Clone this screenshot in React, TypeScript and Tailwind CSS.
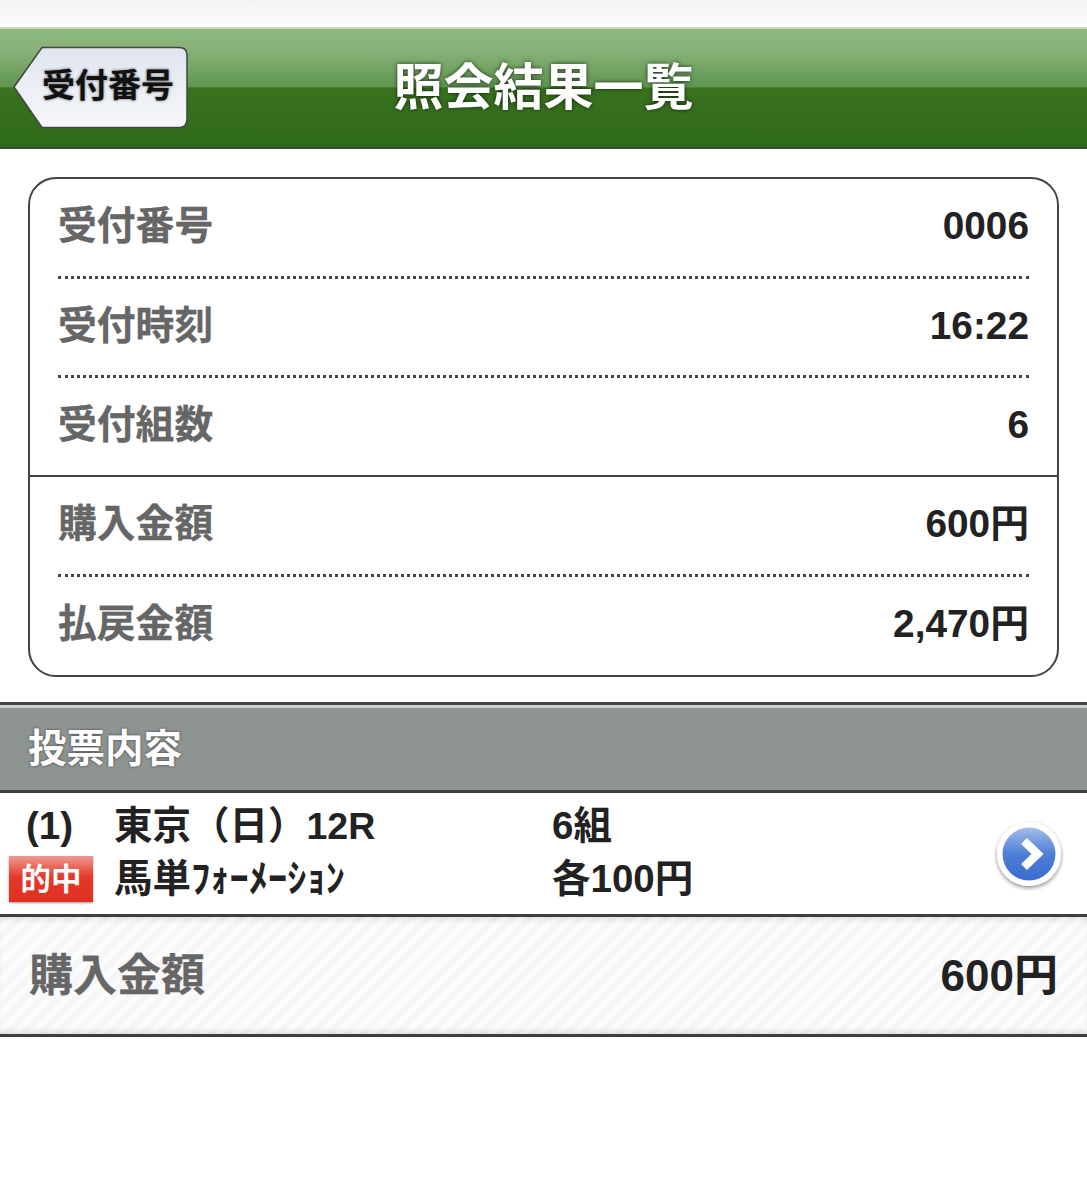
const ff = "font-['Liberation_Sans','Noto_Sans_CJK_JP',sans-serif]";

function InfoRow({ label, value, line, h }: { label: string; value: string; line: boolean; h: string }) {
  return (
    <div className="px-[28px]">
      <div className={`flex items-center justify-between ${h} ${line ? "border-b-[3px] border-dotted border-[#444] pb-[1px]" : "pb-[2px]"}`}>
        <span className="text-[38.8px] font-bold text-[#666] leading-none [-webkit-text-stroke:0.3px_#666]">{label}</span>
        <span className="text-[38.8px] font-bold text-[#222] leading-none">{value}</span>
      </div>
    </div>
  );
}

export default function App() {
  return (
    <div className={`w-[1087px] h-[1200px] overflow-hidden bg-white font-bold ${ff}`}>
      <div className="h-[27px] bg-gradient-to-b from-[#f3f3f3] to-[#fcfcfc]" />
      <header className="relative flex h-[122px] items-center justify-center border-t-2 border-b-2 border-t-[#c5dcbc] border-b-[#3d4a38] bg-[linear-gradient(180deg,#8fb981_0%,#86b076_20%,#5f9650_49%,#3a731f_50%,#2f6a1b_100%)]">
        <h1 className="text-[50px] font-bold leading-none text-white [text-shadow:0_0_4px_rgba(0,0,0,0.7)]">照会結果一覧</h1>
        <svg className="absolute left-[13px] top-[17px]" width="176" height="84" viewBox="0 0 176 84">
          <defs>
            <linearGradient id="bk" x1="0" y1="0" x2="0" y2="1">
              <stop offset="0" stopColor="#dfe5ee" />
              <stop offset="1" stopColor="#f7f8fb" />
            </linearGradient>
          </defs>
          <path d="M1 41 L29 1.5 H166 Q174 1.5 174 9 V73 Q174 81.5 166 81.5 H29 Z" fill="url(#bk)" stroke="#444" strokeWidth="1.5" />
        </svg>
        <span className="absolute left-[42px] top-[37px] text-[33px] leading-[40px] text-[#111] [text-shadow:0_0_3px_rgba(0,0,0,0.6)]">受付番号</span>
      </header>

      <div className="mx-[28px] mt-[28px] h-[500px] rounded-[28px] border-[2.5px] border-[#444] bg-white">
        <InfoRow label="受付番号" value="0006" line h="h-[99.5px]" />
        <InfoRow label="受付時刻" value="16:22" line h="h-[99.5px]" />
        <InfoRow label="受付組数" value="6" line={false} h="h-[97px]" />
        <div className="border-t-[2.5px] border-[#444]" />
        <InfoRow label="購入金額" value="600円" line h="h-[99.5px]" />
        <InfoRow label="払戻金額" value="2,470円" line={false} h="h-[97px]" />
      </div>

      <div className="mt-[25px] flex h-[91px] items-center border-t-[3px] border-b-[3px] border-t-[#444] border-b-[#3c3f3e] bg-[#8e9492] pl-[28px] pt-[4px] shadow-[inset_0_3px_0_#c9cfcb]">
        <span className="text-[38.5px] leading-none text-white [text-shadow:0_0_3px_rgba(0,0,0,0.55)]">投票内容</span>
      </div>

      <div className="relative h-[124px] border-b-[3px] border-[#3c3f3e] bg-white text-[38.5px] leading-[50px] text-[#222]">
        <div className="flex pt-[8px]">
          <span className="w-[114px] pl-[26px]">(1)</span>
          <span className="w-[438px]">東京（日）<span className="text-[37.5px]">12R</span></span>
          <span>6組</span>
        </div>
        <div className="flex pt-[3px]">
          <span className="w-[114px] pl-[9px]">
            <span className="mt-[2px] flex h-[46px] w-[84px] items-center justify-center bg-[linear-gradient(180deg,#ef9a92_0%,#e4392b_45%,#e0301f_100%)] text-[30.5px] leading-none text-white shadow-[0_1px_2px_rgba(0,0,0,0.4)]">的中</span>
          </span>
          <span className="w-[438px]">馬単ﾌｫｰﾒｰｼｮﾝ</span>
          <span>各100円</span>
        </div>
        <svg className="absolute left-[994px] top-[28px]" width="70" height="70" viewBox="0 0 70 70">
          <defs>
            <linearGradient id="bl" x1="0" y1="0" x2="0" y2="1">
              <stop offset="0" stopColor="#a3bde8" />
              <stop offset="0.5" stopColor="#4d7fd6" />
              <stop offset="1" stopColor="#3a6bd0" />
            </linearGradient>
            <filter id="sh" x="-20%" y="-20%" width="140%" height="140%">
              <feDropShadow dx="0" dy="2" stdDeviation="2" floodColor="#000" floodOpacity="0.45" />
            </filter>
          </defs>
          <circle cx="35" cy="33" r="32" fill="#fff" filter="url(#sh)" />
          <circle cx="35" cy="33" r="26.5" fill="url(#bl)" />
          <path d="M30 20 L43.5 33 L30 46" fill="none" stroke="#fff" strokeWidth="8.5" />
        </svg>
      </div>

      <div className="flex h-[120px] items-center justify-between border-b-[3px] border-[#3c3f3e] bg-[repeating-linear-gradient(135deg,#f6f6f6_0px,#f6f6f6_6px,#fcfcfc_6px,#fcfcfc_12px)] px-[29px] shadow-[inset_0_6px_6px_-4px_rgba(0,0,0,0.12),inset_0_-6px_6px_-4px_rgba(0,0,0,0.12)]">
        <span className="text-[44px] leading-none text-[#666] [-webkit-text-stroke:0.3px_#666]">購入金額</span>
        <span className="text-[44px] leading-none text-[#222]">600円</span>
      </div>
    </div>
  );
}
